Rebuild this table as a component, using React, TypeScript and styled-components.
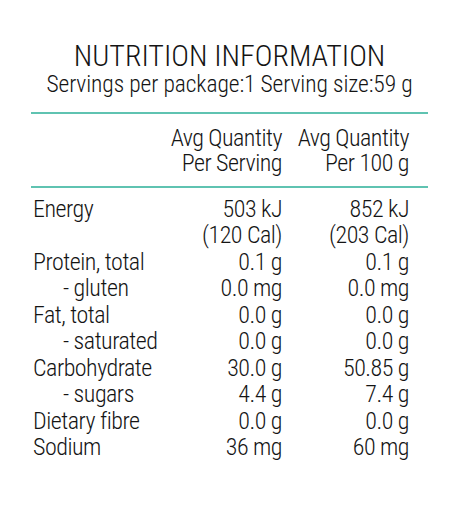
import React from "react";
import styled, { createGlobalStyle } from "styled-components";

const Global = createGlobalStyle`
  body {
    margin: 0;
    background: #ffffff;
  }
`;

const Panel = styled.div`
  width: 397px;
  margin: 0 0 0 31px;
  padding-top: 41px;
  font-family: Roboto, "Liberation Sans", sans-serif;
  font-stretch: condensed;
  font-weight: 350;
  color: #141414;
`;

const Title = styled.h1`
  margin: 0;
  font-size: 30px;
  line-height: 30px;
  font-weight: 330;
  text-align: center;
  white-space: nowrap;
`;

const Subtitle = styled.div`
  margin-top: 1px;
  font-size: 23.5px;
  line-height: 24px;
  text-align: center;
  white-space: nowrap;
  letter-spacing: -0.1px;
`;

const Rule = styled.div<{ $gap: number }>`
  height: 2px;
  background: #5fc3b1;
  margin-top: ${(p) => p.$gap}px;
`;

const Table = styled.div<{ $lh: number; $gap: number }>`
  display: grid;
  grid-template-columns: minmax(0, 1fr) 114px 114px;
  column-gap: 13px;
  padding: 0 19px 0 2px;
  margin-top: ${(p) => p.$gap}px;
  font-size: 24px;
  line-height: ${(p) => p.$lh}px;
  letter-spacing: -0.5px;
`;

const Label = styled.div<{ $sub?: boolean }>`
  padding-left: ${(p) => (p.$sub ? 30 : 0)}px;
  white-space: nowrap;
`;

const Value = styled.div`
  text-align: right;
  white-space: nowrap;
`;

const Line = styled.div``;

type Row = { label: string; sub?: boolean; a: string[]; b: string[] };

const rows: Row[] = [
  { label: "Energy", a: ["503 kJ", "(120 Cal)"], b: ["852 kJ", "(203 Cal)"] },
  { label: "Protein, total", a: ["0.1 g"], b: ["0.1 g"] },
  { label: "- gluten", sub: true, a: ["0.0 mg"], b: ["0.0 mg"] },
  { label: "Fat, total", a: ["0.0 g"], b: ["0.0 g"] },
  { label: "- saturated", sub: true, a: ["0.0 g"], b: ["0.0 g"] },
  { label: "Carbohydrate", a: ["30.0 g"], b: ["50.85 g"] },
  { label: "- sugars", sub: true, a: ["4.4 g"], b: ["7.4 g"] },
  { label: "Dietary fibre", a: ["0.0 g"], b: ["0.0 g"] },
  { label: "Sodium", a: ["36 mg"], b: ["60 mg"] },
];

export default function App() {
  return (
    <>
      <Global />
      <Panel>
        <Title>NUTRITION INFORMATION</Title>
        <Subtitle>Servings per package:1 Serving size:59 g</Subtitle>
        <Rule $gap={16} />
        <Table $lh={25} $gap={12}>
          <Label />
          <Value>
            <Line>Avg Quantity</Line>
            <Line>Per Serving</Line>
          </Value>
          <Value>
            <Line>Avg Quantity</Line>
            <Line>Per 100 g</Line>
          </Value>
        </Table>
        <Rule $gap={10} />
        <Table $lh={26.5} $gap={7.6}>
          {rows.map((r) => (
            <React.Fragment key={r.label}>
              <Label $sub={r.sub}>{r.label}</Label>
              <Value>
                {r.a.map((v) => (
                  <Line key={v}>{v}</Line>
                ))}
              </Value>
              <Value>
                {r.b.map((v) => (
                  <Line key={v}>{v}</Line>
                ))}
              </Value>
            </React.Fragment>
          ))}
        </Table>
      </Panel>
    </>
  );
}
